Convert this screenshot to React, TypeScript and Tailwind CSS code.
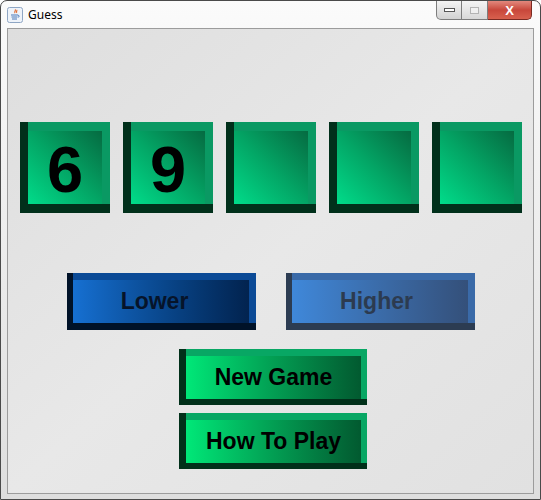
import React from 'react';

const digits = ['6', '9', '', '', ''];

const JavaIcon: React.FC = () => (
  <svg width="16" height="16" viewBox="0 0 16 16">
    <rect x="0.5" y="0.5" width="15" height="15" rx="2" fill="#eef3fa" stroke="#8fa6c4" />
    <path d="M8 2.5c1.5 1.2-1.2 2 0 3.6M9.6 3c1 1-0.8 1.6 0.2 2.8" stroke="#e0662a" strokeWidth="1.1" fill="none" />
    <path d="M4 8h7M4.5 10h6M5 12h5" stroke="#4a78b8" strokeWidth="1" />
    <path d="M11 8.2c1.6 0 1.6 2 0 2" stroke="#4a78b8" strokeWidth="0.9" fill="none" />
  </svg>
);

const TitleBar: React.FC = () => (
  <div className="relative h-[27px] flex items-center pl-[6px] gap-[5px]">
    <JavaIcon />
    <span className="text-[12px] text-black" style={{ fontFamily: '"Noto Sans", "Liberation Sans", sans-serif' }}>
      Guess
    </span>
    <div className="absolute top-0 right-[8px] flex h-[19px]">
      <div className="w-[26px] h-full border border-t-0 border-[#7d7d7d] rounded-bl-[5px] bg-gradient-to-b from-[#f4f4f4] to-[#d2d2d2] flex items-center justify-center">
        <div className="w-[11px] h-[4px] border border-[#555] bg-white" />
      </div>
      <div className="w-[26px] h-full border border-t-0 border-l-0 border-[#7d7d7d] bg-gradient-to-b from-[#f4f4f4] to-[#d8d8d8] flex items-center justify-center">
        <div className="w-[9px] h-[7px] border border-[#b4b4b4] bg-[#f0f0f0]" />
      </div>
      <div className="w-[44px] h-full border border-t-0 border-l-0 border-[#7a2a22] rounded-br-[5px] bg-gradient-to-b from-[#e2887d] via-[#c8473b] to-[#d8604e] flex items-center justify-center">
        <span className="text-white text-[13px] font-bold leading-none" style={{ fontFamily: '"Liberation Sans", sans-serif' }}>
          X
        </span>
      </div>
    </div>
  </div>
);

const Tile: React.FC<{ value: string }> = ({ value }) => (
  <div className="w-[90px] h-[91px] border-l-[8px] border-b-[9px] border-[#01301b] bg-[#0a9963] pt-[9px] pr-[8px]">
    <div className="w-full h-full bg-gradient-to-tr from-[#00dc8a] via-[#03a565] to-[#056b41] flex items-center justify-center">
      <span className="text-[65px] font-bold text-black leading-none pt-[3px]" style={{ fontFamily: '"Liberation Sans", Arial, sans-serif' }}>
        {value}
      </span>
    </div>
  </div>
);

const GameButton: React.FC<{ label: string; variant: 'lower' | 'higher' | 'green'; shift?: string }> = ({ label, variant, shift }) => {
  const frame =
    variant === 'lower'
      ? 'border-[#001228] bg-[#0b4a96]'
      : variant === 'higher'
      ? 'border-[#2c3c52] bg-[#3a6aa8]'
      : 'border-[#01301a] bg-[#08a764]';
  const face =
    variant === 'lower'
      ? 'bg-gradient-to-r from-[#1670d2] to-[#02234f] text-[#06142a]'
      : variant === 'higher'
      ? 'bg-gradient-to-r from-[#3f88da] to-[#34507a] text-[#2c3b50]'
      : 'bg-gradient-to-r from-[#00e878] to-[#025a30] text-black';
  const size = variant === 'green' ? 'w-[188px] h-[56px] border-l-[7px] border-b-[6px] pt-[7px] pr-[6px]' : 'w-[189px] h-[57px] border-l-[6px] border-b-[7px] pt-[7px] pr-[7px]';
  return (
    <div className={`${size} ${frame}`}>
      <div className={`w-full h-full flex items-center justify-center ${face}`}>
        <span className={`text-[23px] font-bold leading-none ${shift ?? ''}`} style={{ fontFamily: '"Liberation Sans", Arial, sans-serif' }}>
          {label}
        </span>
      </div>
    </div>
  );
};

export default function App() {
  return (
    <div className="w-[541px] h-[500px] overflow-hidden bg-white">
      <div className="w-[541px] h-[500px] border border-[#4a4a4a] rounded-t-[7px] bg-gradient-to-b from-[#fbfbfb] via-[#ececec] to-[#dedede] flex flex-col">
        <TitleBar />
        <div className="mx-[6px] h-[466px] border border-[#9c9c9c] bg-gradient-to-br from-[#dedede] via-[#e8e8e8] to-[#e1e1e1] flex flex-col">
          <div className="flex gap-[13px] pl-[12px] pt-[93px]">
            {digits.map((d, i) => (
              <Tile key={i} value={d} />
            ))}
          </div>
          <div className="flex justify-center gap-[30px] mt-[60px]">
            <GameButton label="Lower" variant="lower" shift="pr-[12px]" />
            <GameButton label="Higher" variant="higher" shift="pr-[6px]" />
          </div>
          <div className="flex flex-col items-center gap-[8px] mt-[19px] pl-[5px]">
            <GameButton label="New Game" variant="green" />
            <GameButton label="How To Play" variant="green" />
          </div>
        </div>
      </div>
    </div>
  );
}
